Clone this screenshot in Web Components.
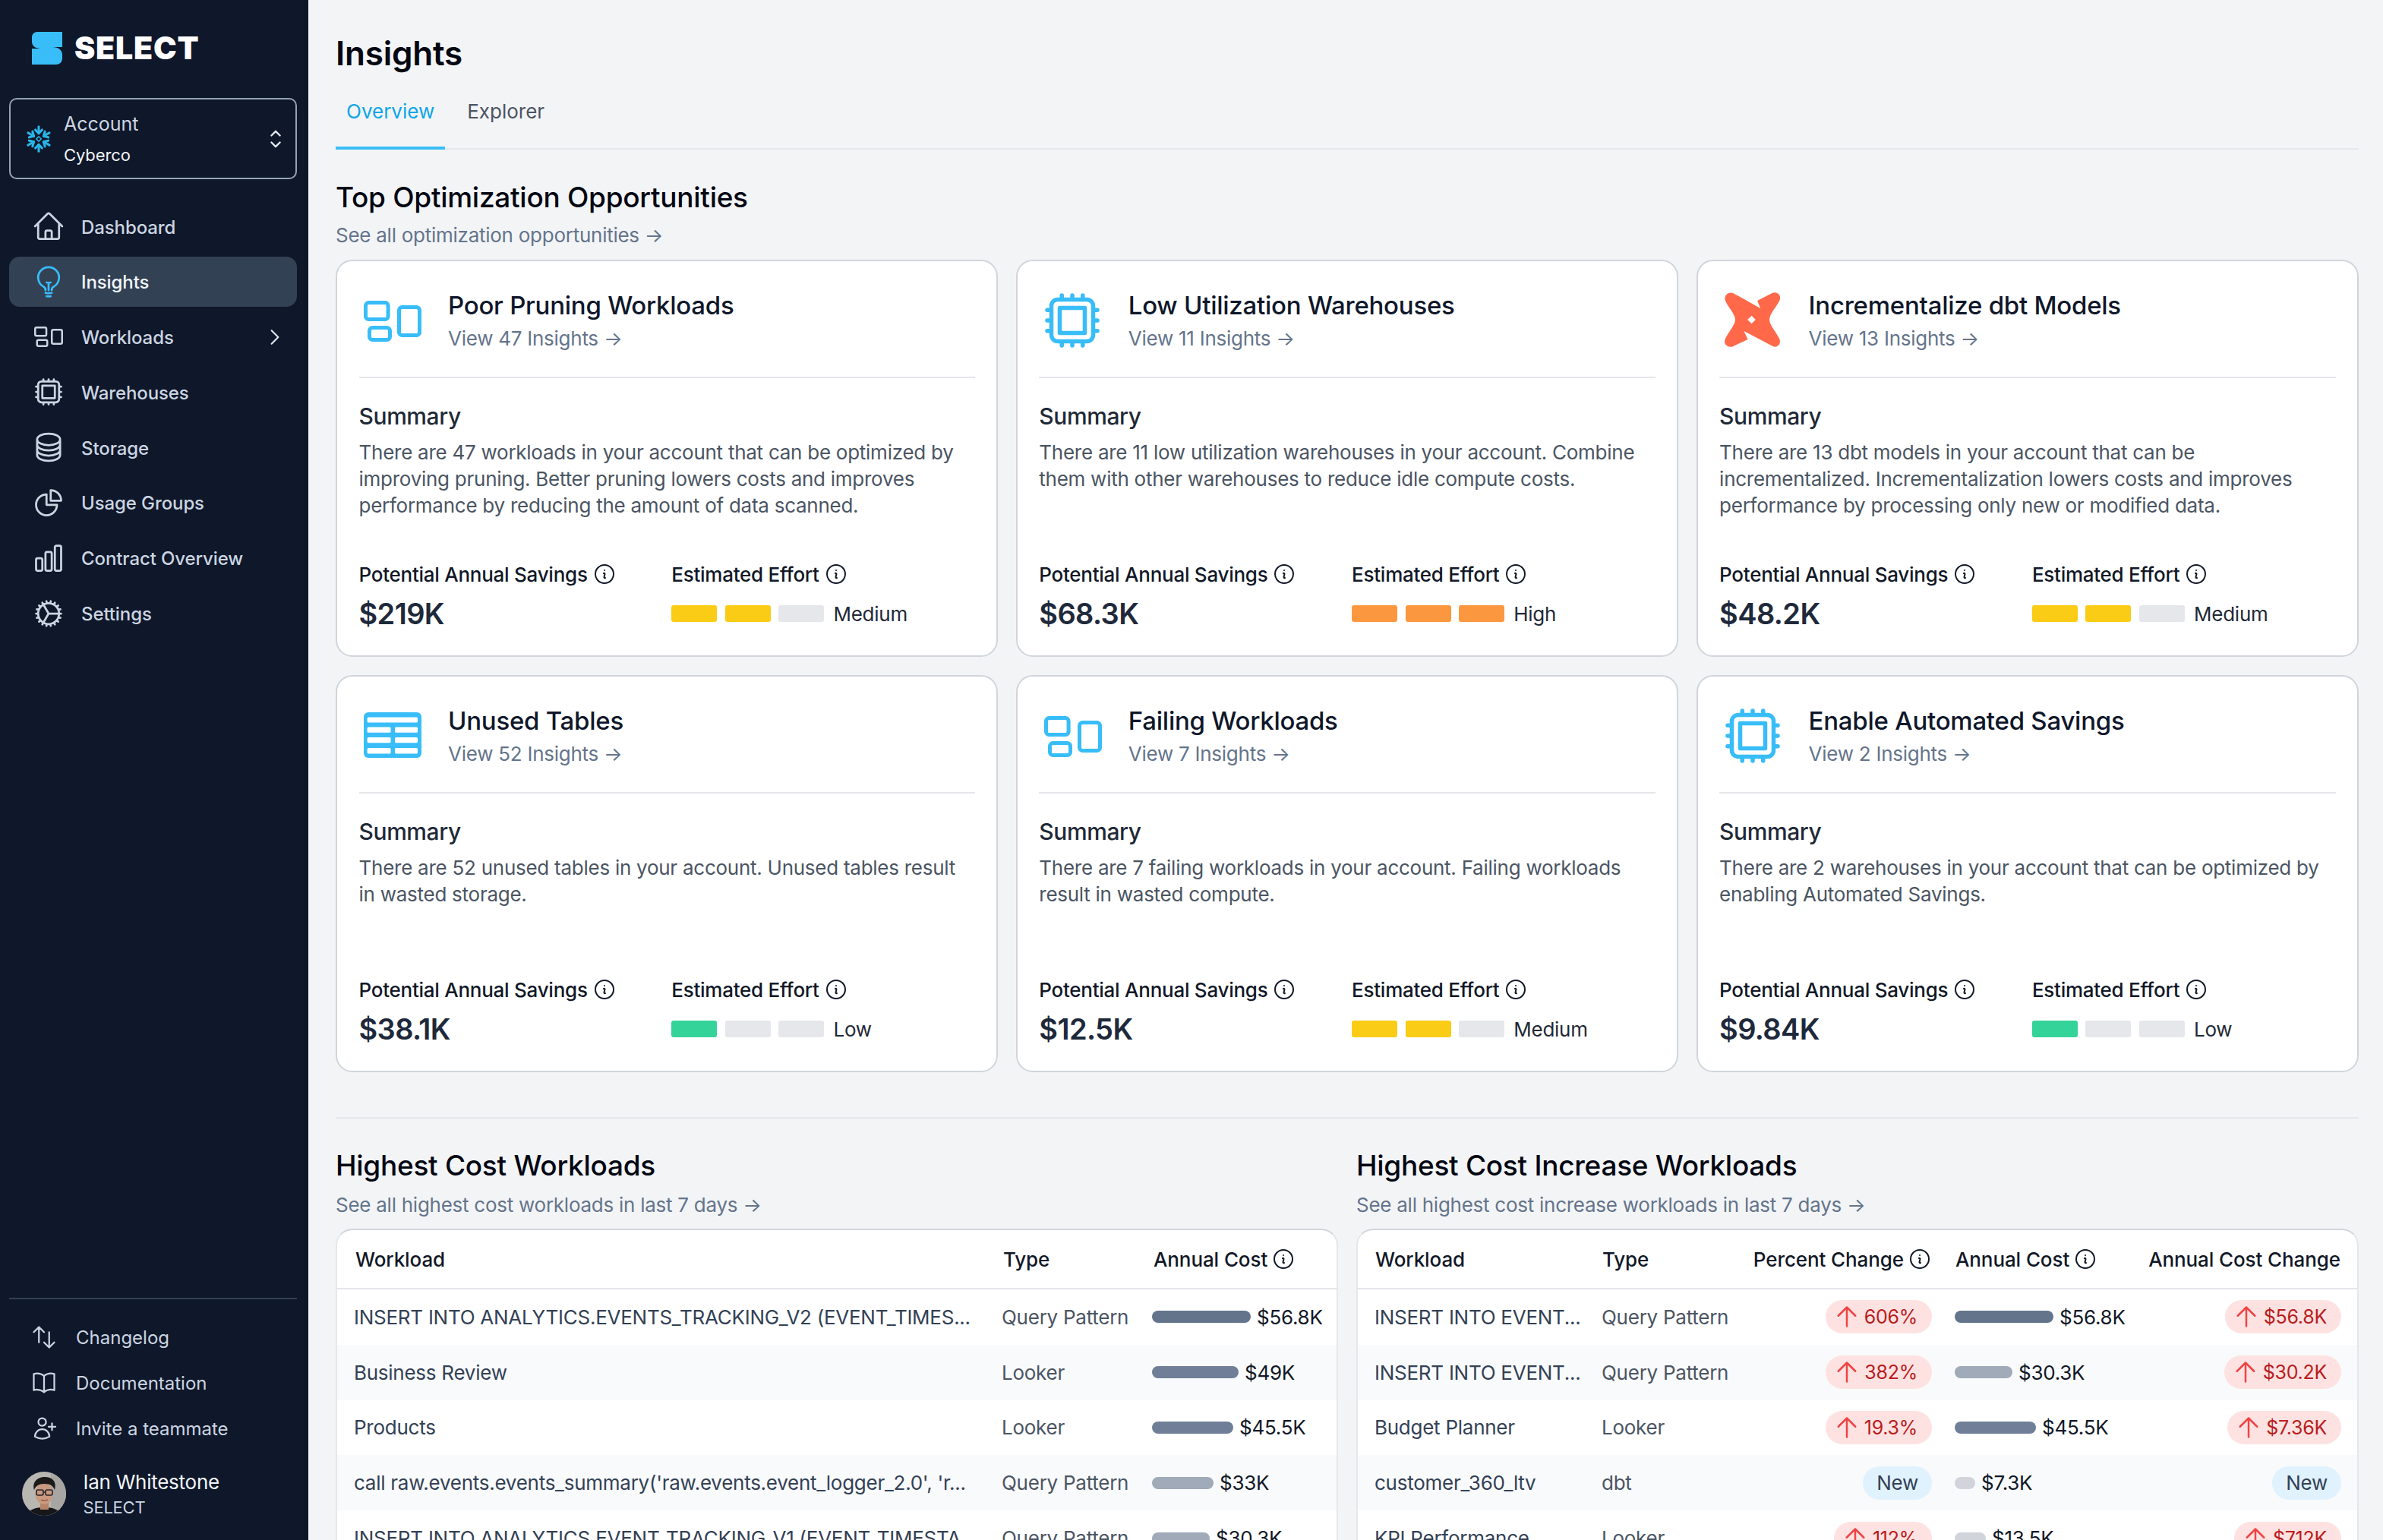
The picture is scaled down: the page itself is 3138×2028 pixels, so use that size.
<!doctype html>
<html lang="en">
<head>
<meta charset="utf-8">
<title>SELECT Insights</title>
<style>
html,body{margin:0;padding:0;width:100%;height:100%;overflow:hidden;background:#f3f4f6;font-family:Inter,"Liberation Sans",sans-serif}
</style>
</head>
<body>
<select-app>
  <side-bar slot="side">
    <nav-item slot="nav" icon="home">Dashboard</nav-item>
    <nav-item slot="nav" icon="bulb" active>Insights</nav-item>
    <nav-item slot="nav" icon="workload" chevron>Workloads</nav-item>
    <nav-item slot="nav" icon="chip">Warehouses</nav-item>
    <nav-item slot="nav" icon="stack">Storage</nav-item>
    <nav-item slot="nav" icon="pie">Usage Groups</nav-item>
    <nav-item slot="nav" icon="bars">Contract Overview</nav-item>
    <nav-item slot="nav" icon="cog">Settings</nav-item>
    <foot-link slot="foot" icon="updown">Changelog</foot-link>
    <foot-link slot="foot" icon="book">Documentation</foot-link>
    <foot-link slot="foot" icon="userplus">Invite a teammate</foot-link>
  </side-bar>

  <page-title>Insights</page-title>
  <tab-bar>
    <tab-item active>Overview</tab-item>
    <tab-item>Explorer</tab-item>
  </tab-bar>

  <section-head title-text="Top Optimization Opportunities" style="margin-top:39px">See all optimization opportunities →</section-head>

  <card-grid>
    <insight-card icon="workload" heading="Poor Pruning Workloads" link="View 47 Insights →" savings="$219K" effort="medium">There are 47 workloads in your account that can be optimized by improving pruning. Better pruning lowers costs and improves performance by reducing the amount of data scanned.</insight-card>
    <insight-card icon="chip" heading="Low Utilization Warehouses" link="View 11 Insights →" savings="$68.3K" effort="high">There are 11 low utilization warehouses in your account. Combine them with other warehouses to reduce idle compute costs.</insight-card>
    <insight-card icon="dbt" heading="Incrementalize dbt Models" link="View 13 Insights →" savings="$48.2K" effort="medium">There are 13 dbt models in your account that can be incrementalized. Incrementalization lowers costs and improves performance by processing only new or modified data.</insight-card>
    <insight-card icon="table" heading="Unused Tables" link="View 52 Insights →" savings="$38.1K" effort="low">There are 52 unused tables in your account. Unused tables result in wasted storage.</insight-card>
    <insight-card icon="workload" heading="Failing Workloads" link="View 7 Insights →" savings="$12.5K" effort="medium">There are 7 failing workloads in your account. Failing workloads result in wasted compute.</insight-card>
    <insight-card icon="chip" heading="Enable Automated Savings" link="View 2 Insights →" savings="$9.84K" effort="low">There are 2 warehouses in your account that can be optimized by enabling Automated Savings.</insight-card>
  </card-grid>

  <tables-area>
    <table-panel>
      <section-head title-text="Highest Cost Workloads" compact>See all highest cost workloads in last 7 days →</section-head>
      <data-table style="--cols:853px 198px 265px">
        <data-row head><span>Workload</span><span>Type</span><span class="f">Annual Cost <info-icon></info-icon></span></data-row>
        <data-row><span class="w">INSERT INTO ANALYTICS.EVENTS_TRACKING_V2 (EVENT_TIMES...</span><span class="t">Query Pattern</span><cost-bar w="130" c="#64748b">$56.8K</cost-bar></data-row>
        <data-row alt><span class="w">Business Review</span><span class="t">Looker</span><cost-bar w="114" c="#707f97">$49K</cost-bar></data-row>
        <data-row><span class="w">Products</span><span class="t">Looker</span><cost-bar w="107" c="#707f97">$45.5K</cost-bar></data-row>
        <data-row alt><span class="w">call raw.events.events_summary('raw.events.event_logger_2.0', 'r...</span><span class="t">Query Pattern</span><cost-bar w="81" c="#a0aab8">$33K</cost-bar></data-row>
        <data-row><span class="w">INSERT INTO ANALYTICS.EVENT_TRACKING_V1 (EVENT_TIMESTA...</span><span class="t">Query Pattern</span><cost-bar w="76" c="#a0aab8">$30.3K</cost-bar></data-row>
      </data-table>
    </table-panel>
    <table-panel>
      <section-head title-text="Highest Cost Increase Workloads" compact>See all highest cost increase workloads in last 7 days →</section-head>
      <data-table style="--cols:299px 199px 266px 255px 297px">
        <data-row head wide><span>Workload</span><span>Type</span><span class="f r">Percent Change <info-icon></info-icon></span><span class="f">Annual Cost <info-icon></info-icon></span><span class="f r">Annual Cost Change</span></data-row>
        <data-row wide><span class="w">INSERT INTO EVENT...</span><span class="t">Query Pattern</span><delta-badge>606%</delta-badge><cost-bar w="130" c="#64748b">$56.8K</cost-bar><delta-badge last>$56.8K</delta-badge></data-row>
        <data-row wide alt><span class="w">INSERT INTO EVENT...</span><span class="t">Query Pattern</span><delta-badge>382%</delta-badge><cost-bar w="76" c="#a0aab8">$30.3K</cost-bar><delta-badge last>$30.2K</delta-badge></data-row>
        <data-row wide><span class="w">Budget Planner</span><span class="t">Looker</span><delta-badge>19.3%</delta-badge><cost-bar w="107" c="#707f97">$45.5K</cost-bar><delta-badge last>$7.36K</delta-badge></data-row>
        <data-row wide alt><span class="w">customer_360_ltv</span><span class="t">dbt</span><delta-badge fresh>New</delta-badge><cost-bar w="27" c="#d1d5db">$7.3K</cost-bar><delta-badge fresh last>New</delta-badge></data-row>
        <data-row wide><span class="w">KPI Performance</span><span class="t">Looker</span><delta-badge>112%</delta-badge><cost-bar w="41" c="#d1d5db">$13.5K</cost-bar><delta-badge last>$712K</delta-badge></data-row>
      </data-table>
    </table-panel>
  </tables-area>
</select-app>

<script>
const PATHS = {
  home:'M2.25 12l8.954-8.955c.44-.439 1.152-.439 1.591 0L21.75 12M4.5 9.75v10.125c0 .621.504 1.125 1.125 1.125H9.75v-4.875c0-.621.504-1.125 1.125-1.125h2.25c.621 0 1.125.504 1.125 1.125V21h4.125c.621 0 1.125-.504 1.125-1.125V9.75M8.25 21h8.25',
  bulb:'M12 18v-5.25m0 0a6.01 6.01 0 001.5-.189m-1.5.189a6.01 6.01 0 01-1.5-.189m3.75 7.478a12.06 12.06 0 01-4.5 0m3.75 2.383a14.406 14.406 0 01-3 0M14.25 18v-.192c0-.983.658-1.823 1.508-2.316a7.5 7.5 0 10-7.517 0c.85.493 1.509 1.333 1.509 2.316V18',
  chip:'M8.25 3v1.5M4.5 8.25H3m18 0h-1.5M4.5 12H3m18 0h-1.5m-15 3.75H3m18 0h-1.5M8.25 19.5V21M12 3v1.5m0 15V21m3.75-18v1.5m0 15V21m-9-1.5h10.5a2.25 2.25 0 002.25-2.25V6.75a2.25 2.25 0 00-2.25-2.25H6.75A2.25 2.25 0 004.5 6.75v10.5a2.25 2.25 0 002.25 2.25zm.75-12h9v9h-9v-9z',
  stack:'M20.25 6.375c0 2.278-3.694 4.125-8.25 4.125S3.75 8.653 3.75 6.375m16.5 0c0-2.278-3.694-4.125-8.25-4.125S3.75 4.097 3.75 6.375m16.5 0v11.25c0 2.278-3.694 4.125-8.25 4.125s-8.25-1.847-8.25-4.125V6.375m16.5 0v3.75m-16.5-3.75v3.75m16.5 0v3.75C20.25 16.153 16.556 18 12 18s-8.25-1.847-8.25-4.125v-3.75m16.5 0c0 2.278-3.694 4.125-8.25 4.125s-8.25-1.847-8.25-4.125',
  pie:'M10.5 6a7.5 7.5 0 107.5 7.5h-7.5V6zM13.5 10.5H21A7.5 7.5 0 0013.5 3v7.5z',
  bars:'M3 13.125C3 12.504 3.504 12 4.125 12h2.25c.621 0 1.125.504 1.125 1.125v6.75C7.5 20.496 6.996 21 6.375 21h-2.25A1.125 1.125 0 013 19.875v-6.75zM9.75 8.625c0-.621.504-1.125 1.125-1.125h2.25c.621 0 1.125.504 1.125 1.125v11.25c0 .621-.504 1.125-1.125 1.125h-2.25a1.125 1.125 0 01-1.125-1.125V8.625zM16.5 4.125c0-.621.504-1.125 1.125-1.125h2.25C20.496 3 21 3.504 21 4.125v15.75c0 .621-.504 1.125-1.125 1.125h-2.25a1.125 1.125 0 01-1.125-1.125V4.125z',
  cog:'M4.5 12a7.5 7.5 0 0015 0m-15 0a7.5 7.5 0 1115 0m-15 0H3m16.5 0H21m-1.5 0H12m-8.457 3.077l1.41-.513m14.095-5.13l1.41-.513M5.106 17.785l1.15-.964m11.49-9.642l1.149-.964M7.501 19.795l.75-1.3m7.5-12.99l.75-1.3m-6.063 16.658l.26-1.477m2.605-14.772l.26-1.477m0 17.726l-.26-1.477M10.698 4.614l-.26-1.477M16.5 19.794l-.75-1.299M7.5 4.205L12 12m6.894 5.785l-1.149-.964M6.256 7.178l-1.15-.964m15.352 8.864l-1.41-.513M4.954 9.435l-1.41-.514M12.002 12l-3.75 6.495',
  updown:'M3 7.5L7.5 3m0 0L12 7.5M7.5 3v13.5m13.5 0L16.5 21m0 0L12 16.5m4.5 4.5V7.5',
  book:'M12 6.042A8.967 8.967 0 006 3.75c-1.052 0-2.062.18-3 .512v14.25A8.987 8.987 0 016 18c2.305 0 4.408.867 6 2.292m0-14.25a8.966 8.966 0 016-2.292c1.052 0 2.062.18 3 .512v14.25A8.987 8.987 0 0018 18a8.967 8.967 0 00-6 2.292m0-14.25v14.25',
  userplus:'M19 7.5v3m0 0v3m0-3h3m-3 0h-3m-2.25-4.125a3.375 3.375 0 11-6.75 0 3.375 3.375 0 016.75 0zM4 19.235v-.11a6.375 6.375 0 0112.75 0v.109A12.318 12.318 0 0110.374 21c-2.331 0-4.512-.645-6.374-1.766z',
  info:'M11.25 11.25l.041-.02a.75.75 0 011.063.852l-.708 2.836a.75.75 0 001.063.853l.041-.021M21 12a9 9 0 11-18 0 9 9 0 0118 0zm-9-3.75h.008v.008H12V8.25z',
  up:'M12 19.5v-15m0 0l-6.75 6.75M12 4.5l6.75 6.75',
  right:'M8.25 4.5l7.5 7.5-7.5 7.5',
  updownchev:'M8.25 15L12 18.75 15.75 15m-7.5-6L12 5.25 15.75 9'
};
const svgIcon=(n,size,color,sw=1.5)=>`<svg width="${size}" height="${size}" viewBox="0 0 24 24" fill="none" stroke="${color}" stroke-width="${sw}" stroke-linecap="round" stroke-linejoin="round" style="display:block;flex:none"><path d="${PATHS[n]}"/></svg>`;
const workloadSvg=(w,h,color)=>`<svg width="${w}" height="${h}" viewBox="0 0 76 54" fill="none" stroke="${color}" stroke-width="5" style="display:block;flex:none"><rect x="2.5" y="2.5" width="29.6" height="22" rx="4"/><rect x="7.5" y="35.5" width="27" height="16" rx="4"/><rect x="46.5" y="8.5" width="27" height="37" rx="4"/></svg>`;

const define=(name,css,render)=>{
  customElements.define(name,class extends HTMLElement{
    constructor(){super();this.attachShadow({mode:'open'})}
    connectedCallback(){this.shadowRoot.innerHTML=`<style>${css}</style>${render(this)}`}
  });
};

define('select-app',`
  :host{display:flex;width:3138px;height:2028px;overflow:hidden;background:#f3f4f6;font-family:Inter,"Liberation Sans",sans-serif}
  main{flex:1;min-width:0;padding:0 32px 0 36px;height:2028px;overflow:hidden;box-sizing:border-box}
`,()=>`<slot name="side"></slot><main><slot></slot></main>`);

define('side-bar',`
  :host{display:flex;flex-direction:column;flex:none;width:406px;height:2028px;box-sizing:border-box;background:#0f172a;font-family:Inter,"Liberation Sans",sans-serif;padding-right:15px;padding-left:12px}
  .logo{display:flex;align-items:center;height:43px;margin:42px 0 0 30px;gap:16px}
  .word{font-size:41px;font-weight:900;color:#fff;letter-spacing:.8px;line-height:43px}
  .acct{display:flex;align-items:center;height:107px;box-sizing:border-box;margin-top:44px;border:2px solid #94a3b8;border-radius:10px;padding:0 8px 0 19px}
  .acct .txt{margin-left:15px;flex:1}
  .a1{font-size:25px;color:#cbd5e1;line-height:38px}
  .a2{font-size:22px;color:#f1f5f9;line-height:36px;margin-top:4px;letter-spacing:-.1px}
  .nav{display:flex;flex-direction:column;gap:6.8px;margin-top:29px}
  .foot{margin-top:auto;border-top:2px solid #334155;padding-top:20px}
  .user{display:flex;align-items:center;margin:23px 0 28px 17px}
  .u1{font-size:26px;color:#f1f5f9;line-height:36px;letter-spacing:-.01em}
  .u2{font-size:22px;color:#cbd5e1;line-height:30px;letter-spacing:-.01em}
  .avatar{margin-right:22.5px;display:block;flex:none}
`,()=>`
  <div class="logo">
    <svg width="40" height="43" viewBox="0 0 40 43" style="flex:none"><path fill="#38bdf8" d="M7 0H40V20H27C35 20 40 24 40 30V35C40 40 36 43 32 43H0V22H12C4 22 0 18 0 13V7C0 3 3 0 7 0Z"/></svg>
    <span class="word">SELECT</span>
  </div>
  <div class="acct">
    <svg width="36" height="36" viewBox="0 0 36 36" fill="none" stroke="#29b5e8" stroke-width="3.1" stroke-linecap="round" stroke-linejoin="round" style="flex:none">
      ${[0,60,120,180,240,300].map(a=>`<g transform="rotate(${a} 18 18)"><path d="M18 1.8V10.6"/><path d="M13.6 6L18 10.6L22.4 6"/></g>`).join('')}
      <rect x="15.7" y="15.7" width="4.6" height="4.6" transform="rotate(45 18 18)" stroke-width="1.5"/>
    </svg>
    <div class="txt"><div class="a1">Account</div><div class="a2">Cyberco</div></div>
    ${svgIcon('updownchev',36,'#e2e8f0',1.6)}
  </div>
  <div class="nav"><slot name="nav"></slot></div>
  <div class="foot"><slot name="foot"></slot></div>
  <div class="user">
    <svg class="avatar" width="58" height="58" viewBox="0 0 58 58">
      <defs><clipPath id="av"><circle cx="29" cy="29" r="29"/></clipPath></defs>
      <g clip-path="url(#av)">
        <rect width="58" height="58" fill="#b9b7b2"/>
        <rect x="38" width="20" height="58" fill="#a8a6a2"/>
        <path d="M6 58C8 50 18 47 29 47s21 3 23 11z" fill="#17161a"/>
        <rect x="24" y="38" width="11" height="12" fill="#b88468"/>
        <ellipse cx="29" cy="29" rx="11.5" ry="14" fill="#c99a80"/>
        <path d="M16 24C13 14 20 7 30 7s16 6 13 17c-2-5-5-8-14-8-7 0-11 3-13 8z" fill="#1d1a1a"/>
        <g fill="none" stroke="#26242a" stroke-width="1.6"><rect x="19" y="24" width="9" height="7" rx="2"/><rect x="31" y="24" width="9" height="7" rx="2"/><path d="M28 27h3"/></g>
        <path d="M25 37q4 2 9 0" stroke="#9a5c4c" stroke-width="1.4" fill="none"/>
      </g>
    </svg>
    <div><div class="u1">Ian Whitestone</div><div class="u2">SELECT</div></div>
  </div>`);

define('nav-item',`
  :host{display:flex;align-items:center;height:66px;border-radius:14px;padding-left:30px;color:#cbd5e1;font-size:24px;font-weight:500;font-family:Inter,"Liberation Sans",sans-serif;letter-spacing:-.1px}
  :host([active]){background:#334155;color:#f1f5f9}
  .ic{width:44px;height:44px;display:flex;align-items:center;justify-content:center;margin-right:21px;flex:none}
  .t{flex:1;padding-top:2px}
  .ch{margin-right:15px}
`,h=>{
  const c=h.hasAttribute('active')?'#38bdf8':'#cbd5e1',n=h.getAttribute('icon');
  return `<span class="ic">${n==='workload'?workloadSvg(38,27,c):svgIcon(n,44,c)}</span><span class="t"><slot></slot></span>${h.hasAttribute('chevron')?`<span class="ch">${svgIcon('right',28,'#e2e8f0',1.8)}</span>`:''}`;
});

define('foot-link',`
  :host{display:flex;align-items:center;height:60px;padding-left:28px;color:#cbd5e1;font-size:24px;font-family:Inter,"Liberation Sans",sans-serif}
  svg{margin-right:24px}
`,h=>`${svgIcon(h.getAttribute('icon'),36,'#cbd5e1')}<slot></slot>`);

define('page-title',`
  :host{display:block;padding-top:46px;font-size:44px;line-height:48px;font-weight:600;color:#030712;font-family:Inter,"Liberation Sans",sans-serif;letter-spacing:-.2px}
`,()=>`<slot></slot>`);

define('tab-bar',`
  :host{display:flex;gap:15px;margin-top:2px;border-bottom:2px solid #e5e7eb;height:99px;box-sizing:content-box;font-family:Inter,"Liberation Sans",sans-serif}
`,()=>`<slot></slot>`);

define('tab-item',`
  :host{display:flex;align-items:center;box-sizing:border-box;height:101px;padding:4px 14px 0;font-size:26px;color:#4b5563;border-bottom:4px solid transparent;margin-bottom:-2px}
  :host([active]){color:#0ea5e9;border-bottom-color:#38bdf8}
`,()=>`<slot></slot>`);

define('section-head',`
  :host{display:block;font-family:Inter,"Liberation Sans",sans-serif}
  h2{margin:0;font-size:37px;line-height:48px;font-weight:500;color:#030712;letter-spacing:-.28px}
  p{margin:9px 0 0;font-size:26px;line-height:34px;color:#64748b;letter-spacing:-.01em}
  :host([compact]) p{margin-top:11px}
`,h=>`<h2>${h.getAttribute('title-text')}</h2><p><slot></slot></p>`);

define('card-grid',`
  :host{display:grid;grid-template-columns:871.8px 871.8px 872.4px;gap:24px;margin-top:15px}
`,()=>`<slot></slot>`);

const cardIcon=n=>{
  if(n==='workload')return `<span style="display:block;margin:2px 0 0 6.5px">${workloadSvg(76,54,'#38bdf8')}</span>`;
  if(n==='chip')return `<span style="display:block;margin:0 0 0 -.5px">${svgIcon('chip',88,'#38bdf8')}</span>`;
  if(n==='table')return `<svg style="display:block;margin:-2px 0 0 6.5px" width="76" height="60" viewBox="0 0 76 60"><rect width="76" height="60" rx="6" fill="#38bdf8"/><g fill="#fff"><rect x="4.6" y="6.4" width="66.4" height="7.2" rx="1.5"/><rect x="4.6" y="19.6" width="31" height="7.2" rx="1.5"/><rect x="41" y="19.6" width="30" height="7.2" rx="1.5"/><rect x="4.6" y="33" width="31" height="7.2" rx="1.5"/><rect x="41" y="33" width="30" height="7.2" rx="1.5"/><rect x="4.6" y="47" width="31" height="7.6" rx="1.5"/><rect x="41" y="47" width="30" height="7.6" rx="1.5"/></g></svg>`;
  if(n==='dbt')return `<svg style="display:block;margin:-2px 0 0 6.5px" width="73" height="72" viewBox="0 0 220 216"><path fill="#ff694a" fill-rule="evenodd" d="M15 3C25-1 33 2 40 6L142 63 130 33 187 3C205-5 226 8 219 30 208 56 178 85 178 108 178 131 208 160 218 185 226 206 206 222 190 213L77 153 92 186 33 214C14 221-6 206 2 186 12 160 42 131 42 108 42 85 12 58 2 30-1 18 5 7 15 3ZM107 92 91 108 107 124 123 108Z"/></svg>`;
};

define('info-icon',`
  :host{display:inline-block;width:32px;height:32px;flex:none;vertical-align:middle}
`,()=>svgIcon('info',32,'#111827',1.5));

define('effort-meter',`
  :host{display:flex;align-items:center;height:48px;gap:10.6px;font-size:26px;color:#1f2937;letter-spacing:-.01em}
  i{display:block;width:60px;height:22px;border-radius:3px;background:#e5e7eb}
  span{margin-left:1.4px}
`,h=>{
  const map={low:[1,'#34d399','Low'],medium:[2,'#facc15','Medium'],high:[3,'#fb983f','High']}[h.getAttribute('level')];
  return [0,1,2].map(i=>`<i style="${i<map[0]?`background:${map[1]}`:''}"></i>`).join('')+`<span>${map[2]}</span>`;
});

define('insight-card',`
  :host{display:block;box-sizing:border-box;height:523px;background:#fff;border:2px solid #d1d5db;border-radius:22px;padding:0 28px 0 28.5px;font-family:Inter,"Liberation Sans",sans-serif}
  .head{display:flex;align-items:center;border-bottom:2px solid #e5e7eb;padding:36px 0 33px;height:83px}
  .ic{width:117.5px;flex:none}
  h3{margin:0;font-size:33px;line-height:44px;font-weight:500;color:#0f172a;letter-spacing:-.25px}
  .lnk{margin-top:5px;font-size:26px;line-height:34px;color:#64748b;letter-spacing:-.01em}
  h4{margin:30px 0 0;font-size:30px;line-height:40px;font-weight:500;color:#1f2937;letter-spacing:-.4px}
  .desc{margin-top:10px;height:105px;font-size:26px;line-height:35px;color:#4b5563;letter-spacing:-.01em}
  .m{display:grid;grid-template-columns:411.8px 1fr;margin-top:55px}
  .l{display:flex;align-items:center;height:36px;gap:6px;font-size:26px;font-weight:500;color:#111827;letter-spacing:-.01em}
  .v{height:48px;margin-top:10px}
  .val{font-size:38px;line-height:48px;font-weight:600;color:#1e293b;letter-spacing:-.6px}
`,h=>`
  <div class="head"><div class="ic">${cardIcon(h.getAttribute('icon'))}</div><div><h3>${h.getAttribute('heading')}</h3><div class="lnk">${h.getAttribute('link')}</div></div></div>
  <h4>Summary</h4>
  <div class="desc"><slot></slot></div>
  <div class="m">
    <div class="l">Potential Annual Savings <info-icon></info-icon></div>
    <div class="l">Estimated Effort <info-icon></info-icon></div>
    <div class="v val">${h.getAttribute('savings')}</div>
    <div class="v"><effort-meter level="${h.getAttribute('effort')}"></effort-meter></div>
  </div>`);

define('tables-area',`
  :host{display:grid;grid-template-columns:1320px 1320px;gap:24px;margin-top:59px;border-top:2px solid #e5e7eb;padding-top:38px}
`,()=>`<slot></slot>`);

define('table-panel',`:host{display:block;min-width:0}`,()=>`<slot></slot>`);

define('data-table',`
  :host{display:block;margin-top:14px;background:#fff;border:2px solid #e5e7eb;border-top-color:#d1d5db;border-radius:22px 22px 0 0;overflow:hidden;font-family:Inter,"Liberation Sans",sans-serif}
`,()=>`<slot></slot>`);

define('data-row',`
  :host{display:grid;grid-template-columns:var(--cols);align-items:center;height:72.8px;font-size:26px;color:#1f2937;white-space:nowrap;letter-spacing:-.01em}
  :host([alt]){background:#f9fafb}
  :host([head]){height:76px;border-bottom:2px solid #e5e7eb;font-weight:500;color:#111827;letter-spacing:-.1px}
  ::slotted(*){padding-left:22px;min-width:0}
  ::slotted(.w){color:#334155;overflow:hidden}
  ::slotted(.t){color:#4b5563}
  ::slotted(.f){display:flex;align-items:center;gap:5px}
  ::slotted(.r){justify-content:flex-end;padding-right:8px}
  :host([head]:not([wide])) ::slotted(*){padding-left:24px}
  :host([head][wide]) ::slotted(*){padding-left:23px}
  :host([head]) ::slotted(.r:last-child){padding-right:22px}
`,()=>`<slot></slot>`);

define('cost-bar',`
  :host{display:flex;align-items:center;gap:8px;color:#111827}
  i{display:block;height:16px;border-radius:8px;flex:none}
`,h=>`<i style="width:${h.getAttribute('w')}px;background:${h.getAttribute('c')}"></i><slot></slot>`);

define('delta-badge',`
  :host{display:flex;justify-content:flex-end;padding-right:8px}
  :host([last]){padding-right:21px}
  div{display:flex;align-items:center;height:44px;border-radius:22px;background:#fee2e2;color:#b91c1c;font-size:25px;padding:0 19px 0 8px;gap:3px}
  :host([fresh]) div{background:#e0f2fe;color:#334155;padding:0 18px;font-size:26px}
`,h=>`<div>${h.hasAttribute('fresh')?'':svgIcon('up',40,'#ef4444',1.5)}<slot></slot></div>`);
</script>
</body>
</html>
